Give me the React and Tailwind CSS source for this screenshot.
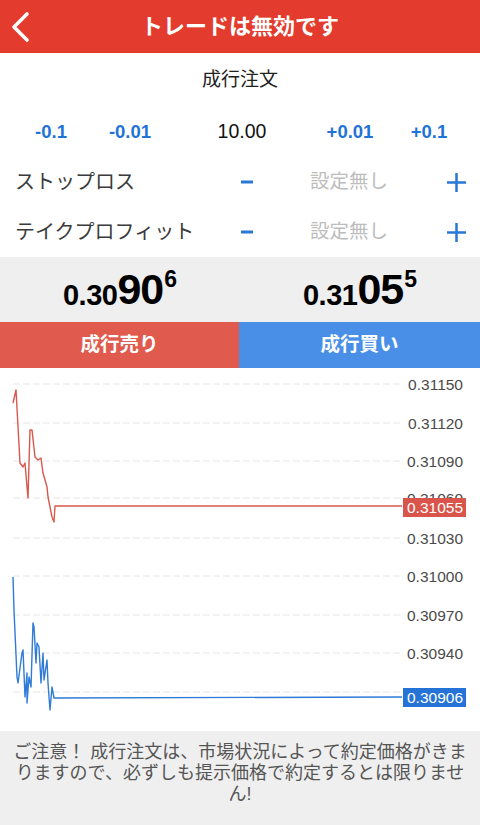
import React from "react";

const FONT = { fontFamily: '"Liberation Sans", "Noto Sans CJK JP", sans-serif' };
const PRICE_FONT = { fontFamily: '"Liberation Sans Narrow", "Liberation Sans", sans-serif' };

const redPts = [
  [13, 35], [16, 22], [20, 95], [23, 99], [25, 95], [27, 119], [28, 130], [30, 62], [32, 62],
  [35, 89], [38, 92], [41, 90], [43, 105], [47, 119], [48, 129], [52, 149], [54, 154], [55, 138], [402, 138],
];
const bluePts = [
  [13, 209], [14, 242], [17, 309], [18, 315], [22, 285], [23, 282], [25, 329], [27, 305], [27, 335],
  [29, 309], [31, 319], [33, 255], [34, 259], [36, 295], [37, 275], [39, 279], [41, 315], [43, 285],
  [44, 312], [47, 292], [48, 315], [50, 342], [52, 319], [54, 330], [402, 329],
];
const toPath = (pts) => pts.map((p, i) => `${i ? "L" : "M"}${p[0]} ${p[1]}`).join(" ");

const topGrid = [
  [16, "0.31150"], [55, "0.31120"], [93, "0.31090"], [130, "0.31060"], [170, "0.31030"],
];
const botGrid = [
  [208, "0.31000"], [247, "0.30970"], [285, "0.30940"], [324, "0.30910"],
];

function Minus() {
  return (
    <svg width="12" height="4" viewBox="0 0 12 4">
      <rect x="0" y="0.5" width="12" height="3" fill="#2a78d6" />
    </svg>
  );
}
function Plus() {
  return (
    <svg width="19" height="19" viewBox="0 0 19 19">
      <rect x="0" y="8.25" width="19" height="2.5" fill="#2a78d6" />
      <rect x="8.25" y="0" width="2.5" height="19" fill="#2a78d6" />
    </svg>
  );
}

function SLRow({ label }) {
  return (
    <div className="flex h-[50px] items-center">
      <div className="w-[220px] pl-[15px] text-[20px] text-[#3a3a3a]">{label}</div>
      <div className="flex w-[54px] justify-center"><Minus /></div>
      <div className="w-[150px] text-center text-[19.5px] text-[#bdbdbd]">設定無し</div>
      <div className="w-[8px]" />
      <div className="flex w-[48px] justify-center"><Plus /></div>
    </div>
  );
}

function Price({ a, b, c }) {
  return (
    <div className="flex flex-1 items-center justify-center">
      <div className="flex items-start font-bold text-black" style={PRICE_FONT}>
        <span className="mt-[13px] text-[29px] leading-none tracking-[-0.5px]">{a}</span>
        <span className="text-[43px] leading-none tracking-[-1px]">{b}</span>
        <span className="ml-[1px] text-[23px] leading-none">{c}</span>
      </div>
    </div>
  );
}

export default function App() {
  return (
    <div className="flex h-[825px] w-[480px] flex-col overflow-hidden bg-white" style={FONT}>
      {/* header */}
      <div className="grid h-[53px] grid-cols-[48px_1fr_48px] items-center bg-[#e33b2d]">
        <div className="flex justify-center pr-[6px]">
          <svg width="22" height="32" viewBox="0 0 22 32">
            <path d="M17 3 L4 16 L17 29" fill="none" stroke="white" strokeWidth="3.6" strokeLinecap="round" strokeLinejoin="round" />
          </svg>
        </div>
        <div className="text-center text-[22px] font-bold text-white">トレードは無効です</div>
        <div />
      </div>

      {/* title */}
      <div className="flex h-[54px] items-center justify-center text-[19px] text-[#222]">成行注文</div>

      {/* steps */}
      <div className="flex h-[50px] items-center pl-[12px] text-[18.5px]">
        <div className="w-[78px] text-center font-bold text-[#1f73d7]">-0.1</div>
        <div className="w-[80px] text-center font-bold text-[#1f73d7]">-0.01</div>
        <div className="w-[144px] text-center text-[19.5px] text-[#111]">10.00</div>
        <div className="w-[72px] text-center font-bold text-[#1f73d7]">+0.01</div>
        <div className="w-[86px] text-center font-bold text-[#1f73d7]">+0.1</div>
      </div>

      <SLRow label="ストップロス" />
      <SLRow label="テイクプロフィット" />

      {/* prices */}
      <div className="flex h-[65px] bg-[#efefef]">
        <Price a="0.30" b="90" c="6" />
        <Price a="0.31" b="05" c="5" />
      </div>

      {/* buttons */}
      <div className="flex h-[46px]">
        <div className="flex w-[239px] items-center justify-center bg-[#e05a4d] text-[19.5px] font-bold text-white">成行売り</div>
        <div className="flex flex-1 items-center justify-center bg-[#4a8fe7] text-[19.5px] font-bold text-white">成行買い</div>
      </div>

      {/* chart */}
      <div className="h-[363px]">
        <svg width="480" height="363" viewBox="0 0 480 363" style={{ fontFamily: '"Liberation Sans", sans-serif' }}>
          {[...topGrid, ...botGrid].map(([y, t]) => (
            <g key={t}>
              <line x1="13" x2="400" y1={y} y2={y} stroke="#e6e6e6" strokeWidth="1" strokeDasharray="7 3" />
              <text x="463" y={y + 5.5} textAnchor="end" fontSize="15.5" fill="#4a4a4a">{t}</text>
            </g>
          ))}
          <path d={toPath(redPts)} fill="none" stroke="#d9574b" strokeWidth="1.4" strokeLinejoin="round" />
          <rect x="403" y="130" width="63" height="19" fill="#d9544a" />
          <text x="463" y="145" textAnchor="end" fontSize="15.5" fill="white">0.31055</text>
          <path d={toPath(bluePts)} fill="none" stroke="#2f7bd6" strokeWidth="1.4" strokeLinejoin="round" />
          <rect x="403" y="320" width="63" height="19" fill="#2573d6" />
          <text x="463" y="335" textAnchor="end" fontSize="15.5" fill="white">0.30906</text>
        </svg>
      </div>

      {/* footer */}
      <div className="flex-1 bg-[#efefef] pt-[11px] text-center text-[18px] leading-[21px] text-[#555]">
        <div className="whitespace-nowrap">ご注意！ 成行注文は、市場状況によって約定価格がきま</div>
        <div className="whitespace-nowrap">りますので、必ずしも提示価格で約定するとは限りませ</div>
        <div className="whitespace-nowrap">ん!</div>
      </div>
    </div>
  );
}
